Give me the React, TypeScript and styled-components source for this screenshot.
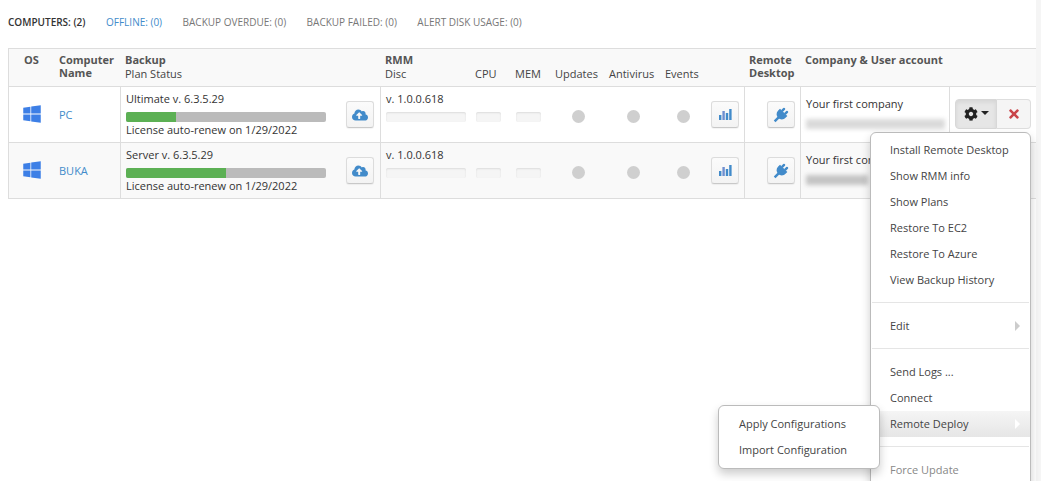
import { createGlobalStyle, styled } from 'styled-components'
import { FaCloudUploadAlt, FaCog, FaTimes, FaWindows } from 'react-icons/fa'

const GlobalStyle = createGlobalStyle`
  html, body {
    margin: 0;
    height: 481px;
    overflow: hidden;
    background: #fff;
    font-family: "Open Sans", "Liberation Sans", sans-serif;
    font-size: 11px;
    color: #333;
  }
  * { box-sizing: border-box; }
`

const Page = styled.div`
  position: relative;
  width: 1041px;
  height: 481px;
  overflow: hidden;
  display: flex;
`

const Main = styled.div`
  width: 1036px;
  padding: 15px 0 0 8px;
`

const ScrollTrack = styled.div`
  width: 5px;
  background: #f5f5f5;
`

const Filters = styled.div`
  display: flex;
  gap: 20.5px;
  height: 33px;
  line-height: 14px;
  font-size: 10px;
`

const Filter = styled.span<{ $tone?: 'active' | 'link' }>`
  color: ${(p) => (p.$tone === 'link' ? '#428bca' : p.$tone === 'active' ? '#333' : '#777')};
  font-weight: ${(p) => (p.$tone === 'active' ? 600 : 400)};
`

const Table = styled.div`
  border: 1px solid #ddd;
  border-right: 0;
  border-bottom: 0;
`

const Row = styled.div<{ $shade?: boolean }>`
  display: grid;
  grid-template-columns: 111px 260px 364px 56px 149px 87px;
  grid-template-rows: minmax(0, 1fr);
  height: 56px;
  border-bottom: 1px solid #ddd;
  background: ${(p) => (p.$shade ? '#f9f9f9' : '#fff')};
`

const HeadRow = styled(Row)`
  height: 38px;
  background: #f9f9f9;
`

const HeadCell = styled.div`
  padding: 4px 0 0 5px;
  line-height: 13px;
  font-weight: 700;
  color: #555;
  font-size: 11px;
`

const SubHead = styled.div`
  font-weight: 400;
  color: #444;
  margin-top: 1px;
`

const IdentHead = styled.div`
  display: grid;
  grid-template-columns: 50px 1fr;
  padding-top: 4px;
  line-height: 13px;
  font-weight: 700;
  color: #555;
  text-align: left;
`

const OsLabel = styled.span`
  padding-left: 15px;
`

const Cell = styled.div<{ $bordered?: boolean }>`
  border-left: ${(p) => (p.$bordered ? '1px solid #ddd' : '0')};
  padding: 5px 5px 0;
  line-height: 14px;
  position: relative;
`

const IdentCell = styled.div`
  display: grid;
  grid-template-columns: 50px 1fr;
  align-items: center;
`

const OsIcon = styled(FaWindows)`
  width: 20px;
  height: 20px;
  color: #3d7fe6;
  margin: -1px 0 0 13px;
`

const CompName = styled.a`
  color: #428bca;
`

const BackupCell = styled(Cell)`
  display: grid;
  grid-template-columns: 200px 1fr;
  column-gap: 20px;
  align-content: start;
`

const Progress = styled.div`
  height: 10px;
  margin: 6px 0 1px;
  background: #bbb;
  border-radius: 2px;
  overflow: hidden;
`

const ProgressFill = styled.div`
  height: 100%;
  background: #5cb054;
`

const SquareButton = styled.button`
  width: 28px;
  height: 27px;
  padding: 0;
  display: flex;
  align-items: center;
  justify-content: center;
  border: 1px solid #dcdcdc;
  border-bottom-color: #c8c8c8;
  border-radius: 3px;
  background: linear-gradient(#fbfbfb, #f3f3f3);
  color: #428bca;
  box-shadow: 0 1px 1px rgba(0, 0, 0, 0.05);
`

const SideButton = styled(SquareButton)`
  margin-top: 9px;
`

const RmmGrid = styled.div`
  display: grid;
  grid-template-columns: 90px 40px 40px 54px 56px 45px 28px;
  grid-template-rows: 14px auto;
  align-content: start;
`

const RmmHead = styled.div`
  display: grid;
  grid-template-columns: 90px 40px 40px 54px 56px 45px 28px;
  font-weight: 400;
  color: #444;
  margin-top: 1px;
`

const Version = styled.div`
  grid-column: 1 / 7;
  grid-row: 1;
`

const MeterRow = styled.div`
  grid-column: 1 / 7;
  grid-row: 2;
  display: grid;
  grid-template-columns: subgrid;
  margin-top: 6px;
`

const Meter = styled.div<{ $w: number }>`
  width: ${(p) => p.$w}px;
  height: 10px;
  border-radius: 2px;
  background: #f5f5f5;
  box-shadow: inset 0 1px 2px rgba(0, 0, 0, 0.1);
`

const Dot = styled.div<{ $offset: number }>`
  width: 13px;
  height: 13px;
  margin: -2px 0 0 ${(p) => p.$offset}px;
  border-radius: 50%;
  background: #cfcfcf;
`

const ChartButton = styled(SquareButton)`
  grid-column: 7;
  grid-row: 1 / 3;
  margin-top: 9px;
`

const RemoteCell = styled(Cell)`
  padding: 14px 0 0 22px;
`

const CompanyCell = styled(Cell)`
  padding-top: 10px;
`

const Blurred = styled.div<{ $w: number; $dark?: boolean }>`
  width: ${(p) => p.$w}px;
  height: 10px;
  margin-top: 8px;
  background: ${(p) => (p.$dark ? '#c4c4c4' : '#dadada')};
  filter: blur(2px);
`

const ActionCell = styled(Cell)`
  padding: 12px 0 0 5px;
`

const ActionGroup = styled.div`
  display: flex;
  width: 76px;
  height: 30px;
`

const GearButton = styled.button`
  width: 42px;
  padding: 0;
  display: flex;
  align-items: center;
  justify-content: center;
  gap: 3px;
  border: 1px solid #d8d8d8;
  border-radius: 4px 0 0 4px;
  background: #e6e6e6;
  box-shadow: inset 0 2px 4px rgba(0, 0, 0, 0.08);
  color: #222;
`

const Caret = styled.span`
  width: 0;
  height: 0;
  border-left: 4px solid transparent;
  border-right: 4px solid transparent;
  border-top: 4px solid #222;
  margin-top: -2px;
`

const DeleteButton = styled.button`
  flex: 1;
  padding: 0;
  display: flex;
  align-items: center;
  justify-content: center;
  border: 1px solid #dedede;
  border-left: 0;
  border-radius: 0 4px 4px 0;
  background: #f5f5f5;
  color: #c9444a;
`

const Menu = styled.div`
  position: absolute;
  left: 870px;
  top: 132px;
  width: 161px;
  height: 380px;
  padding: 4px 0;
  background: #fff;
  border: 1px solid #bbb;
  border-radius: 6px;
  box-shadow: 0 5px 10px rgba(0, 0, 0, 0.2);
`

const MenuItem = styled.div<{ $active?: boolean; $disabled?: boolean }>`
  position: relative;
  height: 26px;
  line-height: 25px;
  padding-left: 19px;
  color: ${(p) => (p.$disabled ? '#888' : '#444')};
  background: ${(p) => (p.$active ? 'linear-gradient(#f5f5f5, #e6e6e6)' : 'transparent')};
`

const Chevron = styled.span<{ $light?: boolean }>`
  position: absolute;
  right: 10px;
  top: 8px;
  width: 0;
  height: 0;
  border-top: 5px solid transparent;
  border-bottom: 5px solid transparent;
  border-left: 5px solid ${(p) => (p.$light ? '#fff' : '#ccc')};
`

const Divider = styled.div`
  height: 1px;
  margin: 9px 1px 10px;
  background: #e5e5e5;
`

const SubMenu = styled.div`
  position: absolute;
  left: 718px;
  top: 405px;
  width: 162px;
  height: 64px;
  padding: 5px 0 5px 1px;
  background: #fff;
  border: 1px solid #bbb;
  border-radius: 6px;
  box-shadow: 0 5px 10px rgba(0, 0, 0, 0.2);
  z-index: 1;
`

const computers = [
  { name: 'PC', plan: 'Ultimate v. 6.3.5.29', used: 25, email: 139 },
  { name: 'BUKA', plan: 'Server v. 6.3.5.29', used: 50, email: 62 },
]

function ChartIcon() {
  return (
    <svg width="13" height="11" viewBox="0 0 13 11" fill="#428bca">
      <rect x="0" y="6" width="2.4" height="5" />
      <rect x="3.4" y="2" width="2.4" height="9" fill="#6f8fd0" />
      <rect x="6.8" y="4" width="2.4" height="7" />
      <rect x="10.2" y="0" width="2.4" height="11" />
    </svg>
  )
}

function PlugIcon() {
  return (
    <svg width="16" height="16" viewBox="0 0 16 16" fill="#428bca">
      <g transform="rotate(45 8 8)">
        <rect x="4.7" y="0.5" width="2.4" height="4.5" rx="1" />
        <rect x="8.9" y="0.5" width="2.4" height="4.5" rx="1" />
        <path d="M2.8 4.2h10.4v2.6c0 3-2.2 5.2-5.2 5.2s-5.2-2.2-5.2-5.2z" />
        <rect x="6.8" y="11" width="2.4" height="6" />
      </g>
    </svg>
  )
}

function ComputerRow({ c, shade }: { c: (typeof computers)[number]; shade: boolean }) {
  return (
    <Row $shade={shade}>
      <IdentCell>
        <OsIcon />
        <CompName>{c.name}</CompName>
      </IdentCell>
      <BackupCell $bordered>
        <div>
          {c.plan}
          <Progress>
            <ProgressFill style={{ width: `${c.used}%` }} />
          </Progress>
          License auto-renew on 1/29/2022
        </div>
        <SideButton>
          <FaCloudUploadAlt size={16} />
        </SideButton>
      </BackupCell>
      <Cell $bordered>
        <RmmGrid>
          <Version>v. 1.0.0.618</Version>
          <MeterRow>
            <Meter $w={80} />
            <Meter $w={25} />
            <Meter $w={25} />
            <Dot $offset={16} />
            <Dot $offset={17} />
            <Dot $offset={11} />
          </MeterRow>
          <ChartButton>
            <ChartIcon />
          </ChartButton>
        </RmmGrid>
      </Cell>
      <RemoteCell $bordered>
        <SquareButton>
          <PlugIcon />
        </SquareButton>
      </RemoteCell>
      <CompanyCell $bordered>
        Your first company
        <Blurred $w={c.email} $dark={shade} />
      </CompanyCell>
      <ActionCell $bordered>
        {!shade && (
          <ActionGroup>
            <GearButton>
              <FaCog size={14} />
              <Caret />
            </GearButton>
            <DeleteButton>
              <FaTimes size={14} />
            </DeleteButton>
          </ActionGroup>
        )}
      </ActionCell>
    </Row>
  )
}

export default function App() {
  return (
    <Page>
      <GlobalStyle />
      <Main>
        <Filters>
          <Filter $tone="active">COMPUTERS: (2)</Filter>
          <Filter $tone="link">OFFLINE: (0)</Filter>
          <Filter>BACKUP OVERDUE: (0)</Filter>
          <Filter>BACKUP FAILED: (0)</Filter>
          <Filter>ALERT DISK USAGE: (0)</Filter>
        </Filters>
        <Table>
          <HeadRow>
            <IdentHead>
              <OsLabel>OS</OsLabel>
              <span>
                Computer
                <br />
                Name
              </span>
            </IdentHead>
            <HeadCell>
              Backup
              <SubHead>Plan Status</SubHead>
            </HeadCell>
            <HeadCell>
              RMM
              <RmmHead>
                <span>Disc</span>
                <span>CPU</span>
                <span>MEM</span>
                <span>Updates</span>
                <span>Antivirus</span>
                <span>Events</span>
              </RmmHead>
            </HeadCell>
            <HeadCell>
              Remote
              <br />
              Desktop
            </HeadCell>
            <HeadCell>Company &amp; User account</HeadCell>
            <HeadCell />
          </HeadRow>
          {computers.map((c, i) => (
            <ComputerRow key={c.name} c={c} shade={i === 1} />
          ))}
        </Table>
      </Main>
      <ScrollTrack />
      <Menu>
        <MenuItem>Install Remote Desktop</MenuItem>
        <MenuItem>Show RMM info</MenuItem>
        <MenuItem>Show Plans</MenuItem>
        <MenuItem>Restore To EC2</MenuItem>
        <MenuItem>Restore To Azure</MenuItem>
        <MenuItem>View Backup History</MenuItem>
        <Divider />
        <MenuItem>
          Edit
          <Chevron />
        </MenuItem>
        <Divider />
        <MenuItem>Send Logs ...</MenuItem>
        <MenuItem>Connect</MenuItem>
        <MenuItem $active>
          Remote Deploy
          <Chevron $light />
        </MenuItem>
        <Divider />
        <MenuItem $disabled>Force Update</MenuItem>
      </Menu>
      <SubMenu>
        <MenuItem>Apply Configurations</MenuItem>
        <MenuItem>Import Configuration</MenuItem>
      </SubMenu>
    </Page>
  )
}
